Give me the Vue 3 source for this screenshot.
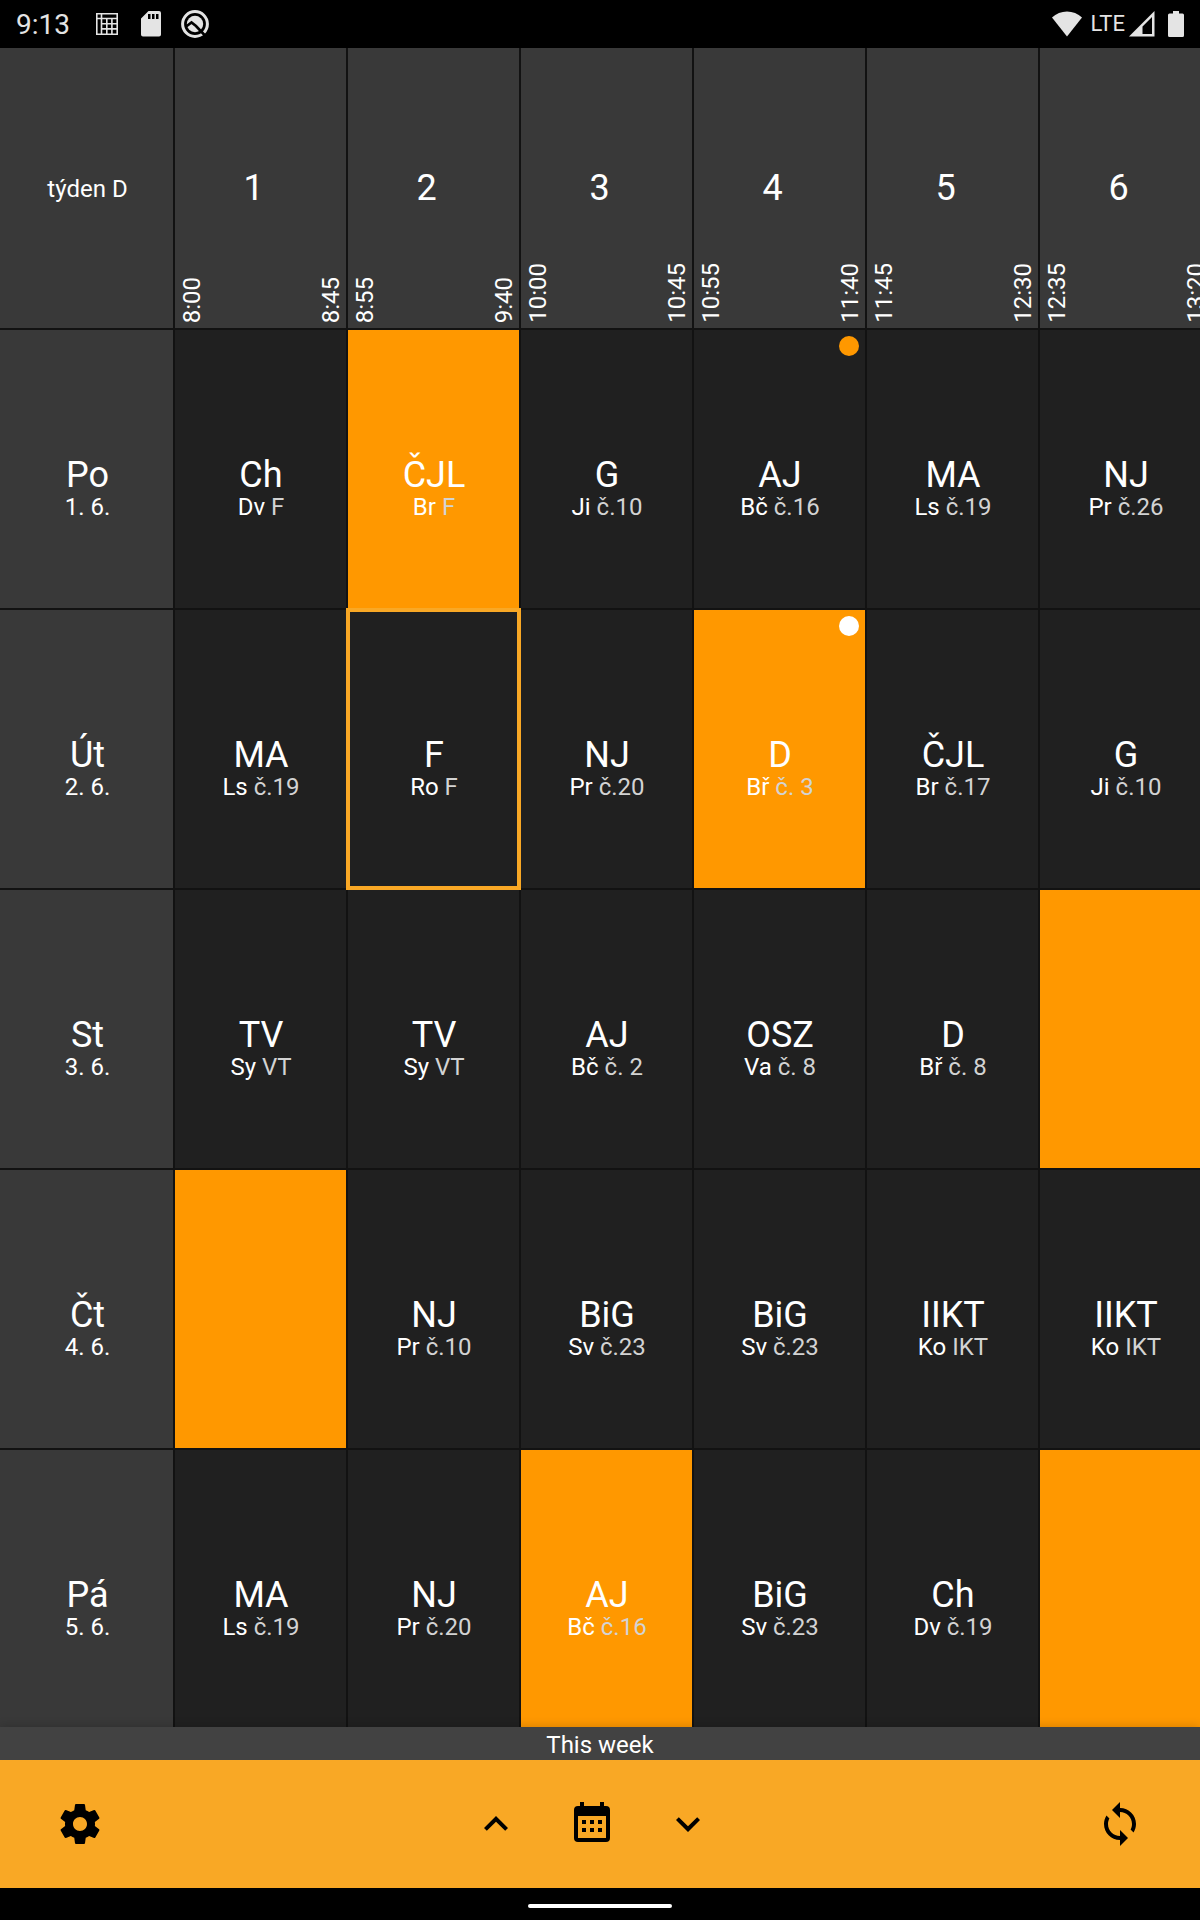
<script setup>
const weekLabel = 'týden D'

const periods = [
  { number: 1, from: '8:00', to: '8:45' },
  { number: 2, from: '8:55', to: '9:40' },
  { number: 3, from: '10:00', to: '10:45' },
  { number: 4, from: '10:55', to: '11:40' },
  { number: 5, from: '11:45', to: '12:30' },
  { number: 6, from: '12:35', to: '13:20' },
]

const lesson = (subject, teacher, room, state = {}) => ({ subject, teacher, room, ...state })
const free = { changed: true }

const days = [
  {
    name: 'Po',
    date: '1. 6.',
    lessons: [
      lesson('Ch', 'Dv', 'F'),
      lesson('ČJL', 'Br', 'F', { changed: true }),
      lesson('G', 'Ji', 'č.10'),
      lesson('AJ', 'Bč', 'č.16', { note: true }),
      lesson('MA', 'Ls', 'č.19'),
      lesson('NJ', 'Pr', 'č.26'),
    ],
  },
  {
    name: 'Út',
    date: '2. 6.',
    lessons: [
      lesson('MA', 'Ls', 'č.19'),
      lesson('F', 'Ro', 'F', { current: true }),
      lesson('NJ', 'Pr', 'č.20'),
      lesson('D', 'Bř', 'č. 3', { changed: true, note: true }),
      lesson('ČJL', 'Br', 'č.17'),
      lesson('G', 'Ji', 'č.10'),
    ],
  },
  {
    name: 'St',
    date: '3. 6.',
    lessons: [
      lesson('TV', 'Sy', 'VT'),
      lesson('TV', 'Sy', 'VT'),
      lesson('AJ', 'Bč', 'č. 2'),
      lesson('OSZ', 'Va', 'č. 8'),
      lesson('D', 'Bř', 'č. 8'),
      free,
    ],
  },
  {
    name: 'Čt',
    date: '4. 6.',
    lessons: [
      free,
      lesson('NJ', 'Pr', 'č.10'),
      lesson('BiG', 'Sv', 'č.23'),
      lesson('BiG', 'Sv', 'č.23'),
      lesson('IIKT', 'Ko', 'IKT'),
      lesson('IIKT', 'Ko', 'IKT'),
    ],
  },
  {
    name: 'Pá',
    date: '5. 6.',
    lessons: [
      lesson('MA', 'Ls', 'č.19'),
      lesson('NJ', 'Pr', 'č.20'),
      lesson('AJ', 'Bč', 'č.16', { changed: true }),
      lesson('BiG', 'Sv', 'č.23'),
      lesson('Ch', 'Dv', 'č.19'),
      free,
    ],
  },
]
</script>

<template>
  <div class="screen">
    <header class="status">
      <time class="clock">9:13</time>
      <svg class="s-table" width="22" height="22" viewBox="0 0 22 22" fill="none" stroke="currentColor" aria-hidden="true">
        <path stroke-width="1.6" d="M.8.8h20.4v20.4H.8zM.8 5.500h20.400M5.500.8v20.400M10.800 5.500v15.700M15.900 5.500v15.700M5.500 10.800h15.700M5.500 15.900h15.700" />
      </svg>
      <svg class="s-card" width="20" height="26" viewBox="0 0 20 26" aria-hidden="true">
        <path fill="currentColor" fill-rule="evenodd" d="M7.500 0H18a2 2 0 0 1 2 2v21.500a2 2 0 0 1-2 2H2a2 2 0 0 1-2-2V7.500zM7 3v5h2.500V3zm4 0v5h2.500V3zm4 0v5h2.500V3z" />
      </svg>
      <svg class="s-app" width="28" height="28" viewBox="0 0 28 28" fill="none" aria-hidden="true">
        <circle cx="14" cy="14" r="12.400" stroke="currentColor" stroke-width="3" />
        <circle cx="14" cy="14" r="8.200" fill="currentColor" />
        <path d="M4.500 17l6-4.500 4.500 3.500 8.500 9" stroke="#000" stroke-width="2.600" />
        <path d="M17 15l8 8.500" stroke="currentColor" stroke-width="0" />
      </svg>
      <span class="spacer"></span>
      <svg width="30" height="26" viewBox="0 0 30 26" aria-hidden="true">
        <path fill="currentColor" d="M0 6.500C4 2.500 9.500.500 15 .500s11 2 15 6L15 25.500z" />
      </svg>
      <span class="network">LTE</span>
      <svg class="s-signal" width="26" height="26" viewBox="0 0 26 26" aria-hidden="true">
        <path fill="currentColor" fill-rule="evenodd" d="M0 25.500 25.500 0v25.500zM13.500 15.500v7.500H23V6z" />
      </svg>
      <svg class="s-battery" width="16" height="26" viewBox="0 0 16 26" aria-hidden="true">
        <path fill="currentColor" d="M5 0h6v2.500h3.500A1.500 1.500 0 0 1 16 4v20.500a1.500 1.500 0 0 1-1.500 1.500h-13A1.500 1.500 0 0 1 0 24.500V4a1.500 1.500 0 0 1 1.500-1.500H5z" />
      </svg>
    </header>

    <main class="board">
      <table class="timetable">
        <thead>
          <tr>
            <th class="corner" scope="col">{{ weekLabel }}</th>
            <th v-for="p in periods" :key="p.number" scope="col">
              <div class="period">
                <time class="hour">{{ p.from }}</time>
                <span class="number">{{ p.number }}</span>
                <time class="hour">{{ p.to }}</time>
              </div>
            </th>
          </tr>
        </thead>
        <tbody>
          <tr v-for="day in days" :key="day.name">
            <th class="day" scope="row">
              <div class="main">{{ day.name }}</div>
              <div class="sub">{{ day.date }}</div>
            </th>
            <td
              v-for="(l, i) in day.lessons"
              :key="i"
              :class="{ changed: l.changed, current: l.current }"
            >
              <template v-if="l.subject">
                <div class="main">{{ l.subject }}</div>
                <div class="sub">{{ l.teacher }} <span class="room">{{ l.room }}</span></div>
              </template>
              <span v-if="l.note" class="dot"></span>
            </td>
          </tr>
        </tbody>
      </table>
    </main>

    <footer class="bottom">
      <p class="week">This week</p>
      <nav class="toolbar">
        <button type="button" aria-label="Settings">
          <svg viewBox="0 0 24 24"><path d="M19.430 12.980c.040-.320.070-.640.070-.980s-.030-.660-.070-.980l2.110-1.650c.190-.150.240-.420.120-.640l-2-3.460c-.120-.220-.390-.300-.610-.220l-2.490 1c-.520-.400-1.080-.730-1.690-.980l-.380-2.650C14.460 2.180 14.250 2 14 2h-4c-.250 0-.460.180-.490.420l-.380 2.650c-.610.250-1.170.590-1.690.980l-2.490-1c-.230-.090-.490 0-.610.220l-2 3.460c-.130.220-.070.490.120.640l2.110 1.650c-.040.320-.070.650-.070.980s.030.660.070.980l-2.110 1.650c-.190.150-.240.420-.120.640l2 3.460c.120.220.390.300.610.220l2.490-1c.520.400 1.080.730 1.690.980l.380 2.650c.030.240.240.420.490.420h4c.250 0 .460-.180.490-.420l.380-2.650c.610-.250 1.170-.590 1.690-.980l2.490 1c.230.090.490 0 .610-.220l2-3.460c.120-.220.070-.490-.120-.640zM12 15.500c-1.930 0-3.500-1.570-3.500-3.500s1.570-3.500 3.500-3.500 3.500 1.570 3.500 3.500-1.570 3.500-3.500 3.500z" /></svg>
        </button>
        <div class="pager">
          <button type="button" aria-label="Previous week">
            <svg viewBox="0 0 24 24"><path d="M7.410 15.410 12 10.830l4.590 4.580L18 14l-6-6-6 6z" /></svg>
          </button>
          <button type="button" aria-label="Current week">
            <svg viewBox="0 0 24 24"><path fill-rule="evenodd" d="M6 1h2v2h8V1h2v2h1a2 2 0 0 1 2 2v14a2 2 0 0 1-2 2H5a2 2 0 0 1-2-2V5a2 2 0 0 1 2-2h1zM5 8v11h14V8zM7 10h2v2H7zm4 0h2v2h-2zm4 0h2v2h-2zM7 14h2v2H7zm4 0h2v2h-2zm4 0h2v2h-2z" /></svg>
          </button>
          <button type="button" aria-label="Next week">
            <svg viewBox="0 0 24 24"><path d="M7.410 8.590 12 13.170l4.590-4.580L18 10l-6 6-6-6z" /></svg>
          </button>
        </div>
        <button type="button" aria-label="Refresh">
          <svg viewBox="0 0 24 24"><path d="M12 4V1L8 5l4 4V6c3.310 0 6 2.690 6 6 0 1.010-.250 1.970-.700 2.800l1.460 1.460C19.540 15.030 20 13.570 20 12c0-4.420-3.580-8-8-8zm0 14c-3.310 0-6-2.690-6-6 0-1.010.250-1.970.700-2.800L5.240 7.740C4.460 8.970 4 10.430 4 12c0 4.420 3.580 8 8 8v3l4-4-4-4z" /></svg>
        </button>
      </nav>
      <div class="gesture"><span></span></div>
    </footer>
  </div>
</template>

<style>
body {
  background: #000;
}
</style>

<style scoped>
.screen {
  --row: calc((100vh - 240px) / 6);
  display: flex;
  flex-direction: column;
  height: 100vh;
  overflow: hidden;
  background: #121212;
  color: #fff;
  font-family: Roboto, "Noto Sans", sans-serif;
  font-size: 24px;
  line-height: 28px;
}

.status {
  flex: none;
  display: flex;
  align-items: center;
  height: 48px;
  padding: 0 16px;
  box-sizing: border-box;
  background: #000;
  color: #e4e4e4;
}
.clock {
  width: 80px;
  padding-top: 2px;
  font-size: 28px;
}
.s-card {
  margin-left: 23px;
}
.s-app {
  margin-left: 20px;
}
.spacer {
  flex: 1;
}
.network {
  margin-left: 8px;
  font-size: 22px;
}
.s-signal {
  margin-left: 4px;
}
.s-battery {
  margin-left: 13px;
}

.board {
  flex: 1;
  min-height: 0;
  overflow: hidden;
}
.timetable {
  width: calc(100% + 11px);
  table-layout: fixed;
  border-collapse: separate;
  border-spacing: 0;
}
th,
td {
  position: relative;
  box-sizing: border-box;
  height: var(--row);
  padding: 0;
  border: 0 solid #121212;
  font-weight: 400;
  text-align: center;
  vertical-align: middle;
}
th {
  background: #393939;
}
td {
  padding: 40px 0 0 1px;
  border-width: 2px 0 0 2px;
  background: #202020;
}
thead th + th {
  border-left-width: 2px;
}
.corner {
  padding: 2px 0 0 2px;
}
.day {
  padding: 40px 0 0 2px;
  border-top-width: 2px;
}
.period {
  display: flex;
  height: var(--row);
  box-sizing: border-box;
  padding: 0 1px 5px 3px;
}
.number {
  flex: 1;
  align-self: center;
  padding: 4px 16px 0 0;
  font-size: 36px;
  line-height: 36px;
}
.hour {
  align-self: flex-end;
  writing-mode: vertical-rl;
  transform: rotate(180deg);
}
.main {
  font-size: 36px;
  line-height: 36px;
}
.room {
  color: #d3d3d3;
}
.changed {
  background: #ff9800;
}
.current::after {
  content: "";
  position: absolute;
  z-index: 1;
  inset: -2px;
  border: 4px solid #f9a825;
}
.dot {
  position: absolute;
  top: 6px;
  right: 6px;
  width: 20px;
  height: 20px;
  border-radius: 50%;
  background: #ff9800;
}
.changed .dot {
  background: #fff;
}

.bottom {
  position: relative;
  z-index: 2;
  flex: none;
  box-shadow: 0 0 10px rgba(0, 0, 0, 0.2);
}
.week {
  height: 33px;
  margin: 0;
  background: #424242;
  line-height: 36px;
  text-align: center;
}
.toolbar {
  display: flex;
  justify-content: space-between;
  padding: 0 32px;
  background: #f9a825;
}
.pager {
  display: flex;
  margin-right: 16px;
}
button {
  display: flex;
  align-items: center;
  justify-content: center;
  width: 96px;
  height: 128px;
  padding: 0;
  border: 0;
  background: none;
  color: #000;
}
button svg {
  width: 48px;
  height: 48px;
  fill: currentColor;
}
.gesture {
  display: flex;
  justify-content: center;
  padding: 16px 0 12px;
  background: #000;
}
.gesture span {
  width: 144px;
  height: 4px;
  border-radius: 2px;
  background: #fff;
}
</style>
